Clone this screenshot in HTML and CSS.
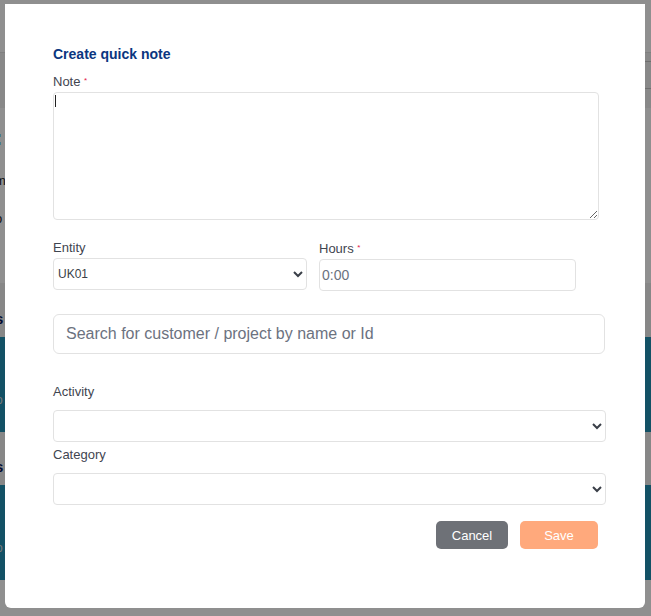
FILE: index.html
```html
<!DOCTYPE html>
<html lang="en">
<head>
<meta charset="utf-8">
<title>Create quick note</title>
<link rel="stylesheet" href="styles.css">
</head>
<body>
<div class="page">
  <div class="topbar"></div>
  <div class="header"><div class="header-btn"></div></div>
  <div class="intro">
    <div class="dots">:</div>
    <div class="line">m</div>
    <div class="line">t</div>
    <div class="line">o</div>
  </div>
  <div class="sec-head"><span>s</span></div>
  <div class="sec-card"><span>o</span></div>
  <div class="sec-head second"><span>s</span></div>
  <div class="sec-card"><span>o</span></div>
</div>
<div class="overlay"></div>

<div class="modal">
  <h2 class="title">Create quick note</h2>
  <label class="label">Note <span class="req">*</span></label>
  <div class="note-wrap">
    <textarea class="note"></textarea>
    <span class="caret"></span>
  </div>
  <div class="row">
    <div class="col">
      <label class="label">Entity</label>
      <select class="field entity"><option>UK01</option></select>
    </div>
    <div class="col">
      <label class="label">Hours <span class="req">*</span></label>
      <input class="field hours" type="text" value="0:00">
    </div>
  </div>
  <input class="search" type="text" placeholder="Search for customer / project by name or Id">
  <label class="label activity-label">Activity</label>
  <select class="field wide"><option></option></select>
  <label class="label category-label">Category</label>
  <select class="field wide"><option></option></select>
  <div class="actions">
    <button class="btn cancel">Cancel</button>
    <button class="btn save">Save</button>
  </div>
</div>
</body>
</html>
```

FILE: styles.css
```css
html, body {
  margin: 0;
  padding: 0;
}
body {
  width: 651px;
  height: 616px;
  overflow: hidden;
  position: relative;
  font-family: "Liberation Sans", Arial, sans-serif;
  background: #ffffff;
}
.page {
  width: 651px;
  height: 616px;
}
.topbar {
  height: 52px;
}
.header {
  height: 55px;
  background: #f3f3f3;
  border-top: 1px solid #e2e2e2;
  position: relative;
}
.header-btn {
  position: absolute;
  right: -10px;
  top: 8px;
  width: 20px;
  height: 26px;
  border: 1px solid #c4c4c4;
  border-radius: 4px;
}
.intro {
  height: 175px;
  box-sizing: border-box;
  padding-top: 20px;
  font-size: 13px;
  color: #222;
}
.dots {
  color: #1a7fae;
  font-weight: bold;
  font-size: 22px;
  line-height: 20px;
  margin-left: -5px;
}
.line {
  line-height: 19px;
  margin-left: -5px;
}
.dots + .line {
  margin-top: 23px;
}
.sec-head {
  height: 54px;
  background: #f0f0f0;
  box-sizing: border-box;
  padding-top: 26px;
  color: #03125a;
  font-weight: bold;
  font-size: 15px;
  line-height: 20px;
}
.sec-head span {
  margin-left: -5px;
}
.sec-head.second {
  height: 53px;
  padding-top: 25px;
}
.sec-card {
  background: #2290b4;
  height: 95px;
  color: #d8d8d8;
  font-size: 12px;
  padding-top: 56px;
  box-sizing: border-box;
}
.sec-card span {
  margin-left: -4px;
}

.overlay {
  position: absolute;
  inset: 0;
  background: rgba(0, 0, 0, 0.44);
}

.modal {
  position: absolute;
  left: 5px;
  top: 4px;
  width: 640px;
  height: 604px;
  box-sizing: border-box;
  background: #ffffff;
  border-radius: 0 0 6px 6px;
  padding: 42px 0 0 48px;
}
.title {
  margin: 0;
  font-size: 14px;
  line-height: 16px;
  font-weight: bold;
  color: #0b3680;
}
.label {
  display: block;
  font-size: 13px;
  line-height: 16px;
  color: #3f4550;
}
.title + .label {
  margin-top: 11px;
}
.req {
  color: #e3194b;
  font-size: 8px;
  vertical-align: 3px;
}
.note-wrap {
  position: relative;
  margin-top: 2px;
  width: 546px;
  height: 128px;
}
.note {
  display: block;
  width: 546px;
  height: 128px;
  box-sizing: border-box;
  border: 1px solid #e2e2e2;
  border-radius: 4px;
  margin: 0;
  padding: 4px;
  resize: vertical;
  font-family: inherit;
  outline: none;
}
.caret {
  position: absolute;
  left: 2px;
  top: 3px;
  width: 1px;
  height: 12px;
  background: #222;
}
.row {
  display: flex;
  gap: 12px;
  margin-top: 20px;
}
.col .label {
  margin-bottom: 2px;
}
.field {
  display: block;
  height: 32px;
  box-sizing: border-box;
  border: 1px solid #e2e2e2;
  border-radius: 4px;
  background: #ffffff;
  font-family: inherit;
  font-size: 12px;
  color: #3a3f48;
  margin: 0;
  outline: none;
}
.entity {
  width: 254px;
  padding: 0;
}
.hours {
  width: 257px;
  padding: 0 2px;
  color: #6b7280;
  font-size: 14px;
}
.search {
  display: block;
  margin-top: 23px;
  width: 552px;
  height: 40px;
  box-sizing: border-box;
  border: 1px solid #e2e2e2;
  border-radius: 6px;
  padding: 0 12px;
  font-family: inherit;
  font-size: 16px;
  outline: none;
}
.search::placeholder {
  color: #6c727f;
}
.activity-label {
  margin-top: 30px;
  margin-bottom: 10px;
}
.category-label {
  margin-top: 5px;
  margin-bottom: 10px;
}
.wide {
  width: 553px;
}
.actions {
  display: flex;
  gap: 12px;
  margin-top: 16px;
  padding-left: 383px;
}
.btn {
  height: 28px;
  border: none;
  border-radius: 5px;
  color: #ffffff;
  font-family: inherit;
  font-size: 13px;
  padding: 0;
}
.cancel {
  width: 72px;
  background: #6e7177;
}
.save {
  width: 78px;
  background: #ffa97c;
}
```
